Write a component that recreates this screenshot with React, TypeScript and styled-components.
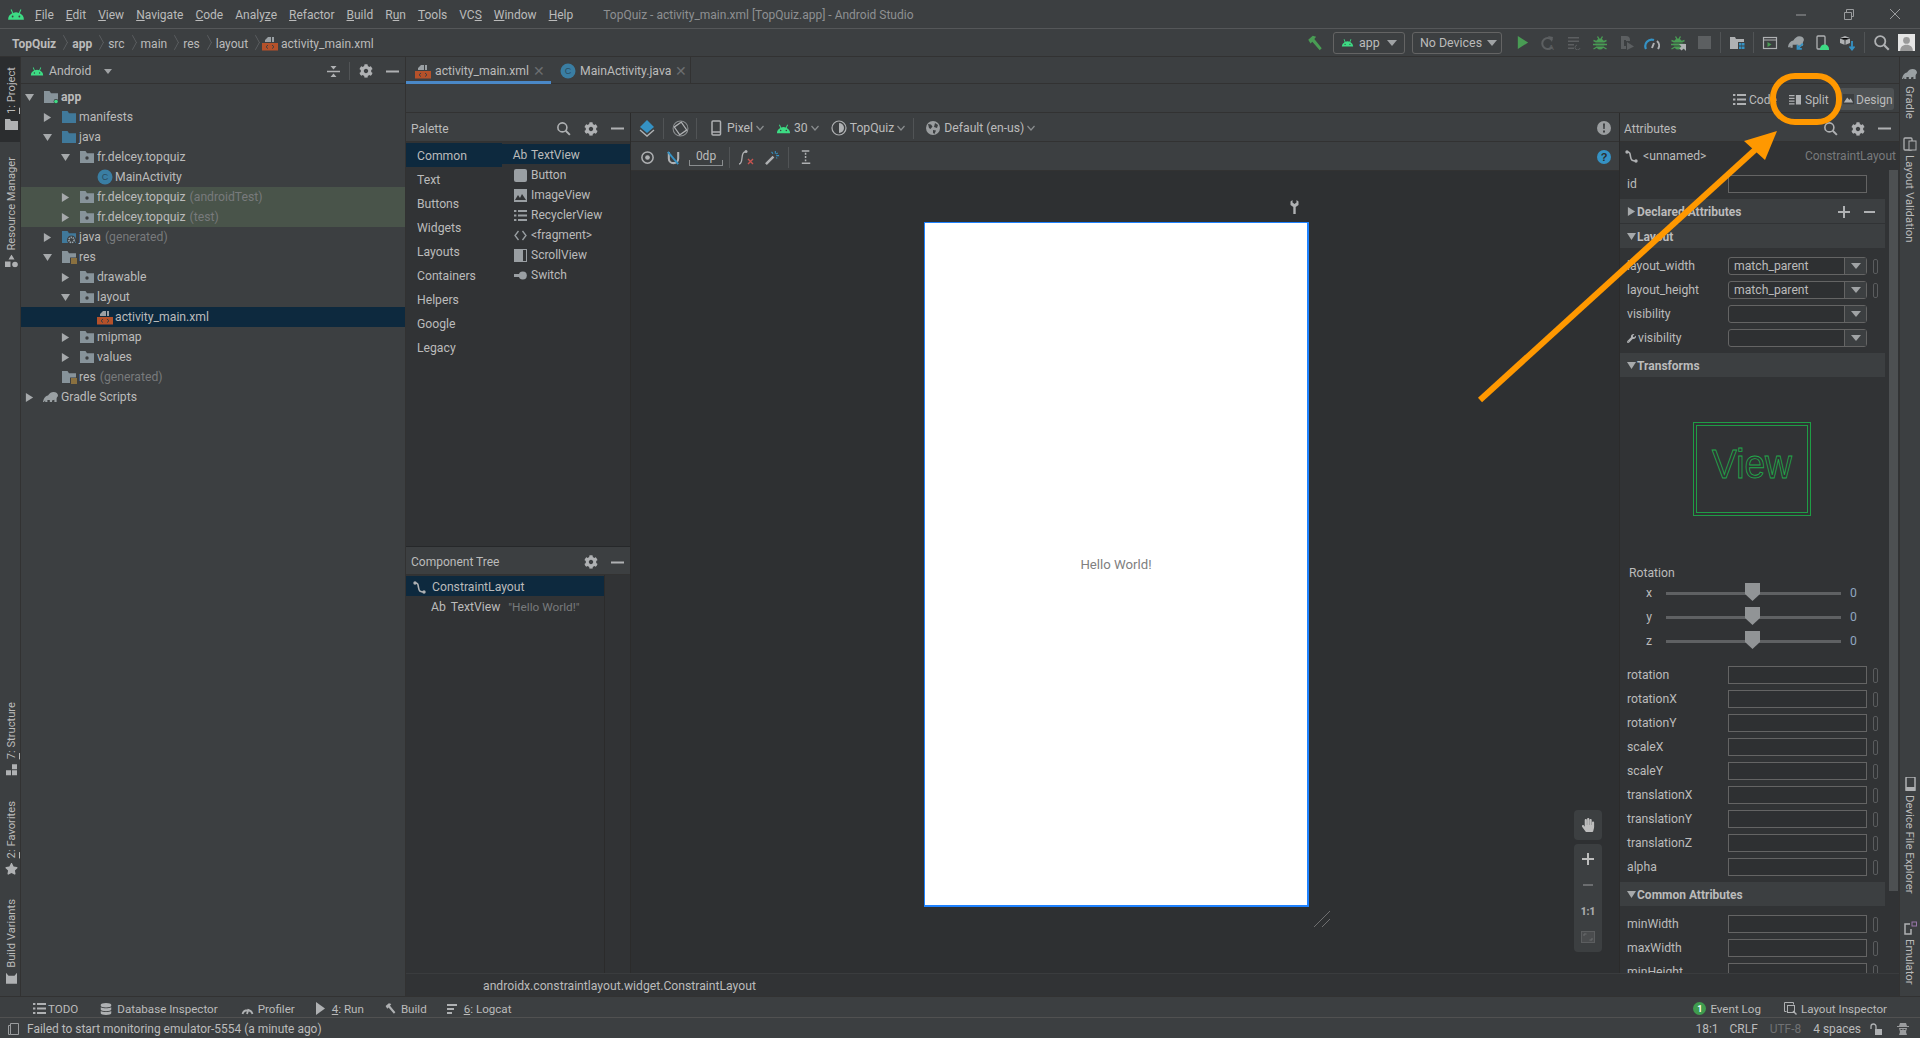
import React from 'react';
import styled, { createGlobalStyle } from 'styled-components';
import { FaCog, FaStar, FaHandPaper, FaDatabase, FaWrench } from 'react-icons/fa';

const Global = createGlobalStyle`
  html, body { margin: 0; padding: 0; background: #3c3f41; }
  body { font-family: Roboto, "Noto Sans", "Liberation Sans", sans-serif; font-size: 12px; color: #bbbbbb; overflow: hidden; }
  * { box-sizing: border-box; }
  u { text-underline-offset: 1px; }
`;

const Page = styled.div`
  position: relative; width: 1920px; height: 1038px; display: flex; flex-direction: column; overflow: hidden; background: #3c3f41;
`;
const Ic = styled.svg<{ $s?: number; $h?: number }>`
  width: ${p => p.$s ?? 16}px; height: ${p => p.$h ?? p.$s ?? 16}px; flex: none; display: block;
`;

/* ---------- icons ---------- */
type IP = { s?: number; c?: string };
const Android = ({ s = 16, c = '#3ddc84' }: IP) => (
  <Ic $s={s} viewBox="0 0 16 16"><path fill={c} d="M1 13a7 6.4 0 0 1 3.6-5.6L3.2 4.2l.9-.4 1.4 3.2a7 7 0 0 1 5 0l1.4-3.2.9.4-1.4 3.2A7 6.4 0 0 1 15 13z" /><circle cx="5" cy="10.2" r=".8" fill="#3c3f41" /><circle cx="11" cy="10.2" r=".8" fill="#3c3f41" /></Ic>
);
const Folder = ({ c = '#87939a', children }: { c?: string; children?: React.ReactNode }) => (
  <Ic $s={16} viewBox="0 0 16 16"><path fill={c} d="M1 2h5.5L8 4.2h7V14H1z" />{children}</Ic>
);
const Pkg = () => <Folder><circle cx="8" cy="9" r="1.7" fill="#3c3f41" /></Folder>;
const AppFolder = () => <Folder><circle cx="13" cy="12.5" r="2.4" fill="#3c3f41" /><circle cx="13" cy="12.5" r="1.8" fill="#3ddc84" /></Folder>;
const ResFolder = () => (
  <Folder><rect x="9" y="8.5" width="7" height="7.5" fill="#3c3f41" /><path stroke="#d9a441" d="M10 10h6M10 12h6M10 14h6" /></Folder>
);
const GenFolder = () => (
  <Folder c="#40799b"><circle cx="10.5" cy="11" r="4.5" fill="#3c3f41" /><circle cx="10.5" cy="11" r="2.6" fill="none" stroke="#9aa7b0" strokeWidth="1.6" strokeDasharray="1.4 .8" /></Folder>
);
const ClassIc = () => (
  <Ic $s={16} viewBox="0 0 16 16"><circle cx="8" cy="8" r="7.5" fill="#3a7ea3" /><text x="8" y="11.2" fontSize="9" fontFamily="Liberation Sans" textAnchor="middle" fill="#2b4c5e">C</text></Ic>
);
const Xml = () => (
  <Ic $s={16} viewBox="0 0 16 16"><path fill="#9aa0a4" d="M3 7V5l3-3h3v5zM10 2h2v5h-2z" /><rect y="8" width="16" height="7.5" fill="#b5512a" /><path fill="none" stroke="#3c3f41" d="M6 10l-2 1.8L6 13.6M10 10l2 1.8-2 1.8" /></Ic>
);
const Tri = ({ open }: { open?: boolean }) => (
  <Ic $s={9} viewBox="0 0 10 10">{open ? <path fill="#a6a9ab" d="M0 1h10L5 9z" /> : <path fill="#a6a9ab" d="M1 0v10l8-5z" />}</Ic>
);
const Search = ({ s = 16 }: IP) => (
  <Ic $s={s} viewBox="0 0 16 16"><circle cx="6.8" cy="6.8" r="4.8" fill="none" stroke="#afb1b3" strokeWidth="1.7" /><path stroke="#afb1b3" strokeWidth="2" d="M10.4 10.4l4.4 4.4" /></Ic>
);
const Gear = () => <FaCog size={14} color="#afb1b3" />;
const Minus = () => <Ic $s={13} viewBox="0 0 13 13"><rect y="5.5" width="13" height="2" fill="#afb1b3" /></Ic>;
const Plus = ({ c = '#afb1b3' }: IP) => <Ic $s={12} viewBox="0 0 12 12"><path fill={c} d="M5 0h2v5h5v2H7v5H5V7H0V5h5z" /></Ic>;
const Chevron = () => <Ic $s={8} $h={6} viewBox="0 0 8 6"><path fill="none" stroke="#8a8d8f" strokeWidth="1.2" d="M.5 1L4 5l3.5-4" /></Ic>;
const Hammer = ({ s = 16, c = '#499c54' }: IP) => (
  <Ic $s={s} viewBox="0 0 16 16"><path fill={c} d="M2 5l4-3.5 3 1-1.6 2 6.6 8.2-1.8 1.8L5.6 6.8 4 8.4z" /></Ic>
);
const Bug = ({ c = '#499c54', extra }: { c?: string; extra?: boolean }) => (
  <Ic $s={16} viewBox="0 0 16 16"><ellipse cx="8" cy="9" rx="4.5" ry="5.5" fill={c} /><path stroke={c} strokeWidth="1.4" d="M1.5 5.5L5 7M14.5 5.5L11 7M1 9.5h3M15 9.5h-3M1.5 14L5 12M14.5 14L11 12M5.5 1.5L7 4M10.5 1.5L9 4" /><path stroke="#3c3f41" d="M3.5 8h9M3.5 11h9" />{extra && <path fill="#afb1b3" d="M9 9h7v7l-2.4-2.4-2 2-2.2-2.2 2-2z" />}</Ic>
);
const Elephant = ({ s = 16, c = '#9aa0a3' }: IP) => (
  <Ic $s={s} viewBox="0 0 16 16"><path fill={c} d="M0 13c.5-3 2-6 5-6.5C6.5 4 8.5 3 10.5 3c2.8 0 4.5 1.6 4.5 3.6 0 .8-.4 1.3-1 1.6l-.4 1.4V13h-2.2v-2.2L9 11.5V13H6.8v-2L4.4 11v2H2.2v-1.8L1 13z" /></Ic>
);
const ListIc = ({ c = '#afb1b3' }: IP) => <Ic $s={13} viewBox="0 0 13 13"><path fill={c} d="M0 1h2.4v2H0zM4 1h9v2H4zM0 5.5h2.4v2H0zM4 5.5h9v2H4zM0 10h2.4v2H0zM4 10h9v2H4z" /></Ic>;

/* ---------- title bar ---------- */
const TitleBar = styled.div`
  height: 29px; flex: none; display: flex; align-items: center; position: relative; border-bottom: 1px solid #555759; padding-left: 7px;
`;
const MenuItem = styled.span<{ $ml: number }>` margin-left: ${p => p.$ml}px; padding-top: 2px; white-space: nowrap; font-size: 12px; `;
const TitleText = styled.span` margin-left: 30px; padding-top: 2px; color: #8e9092; white-space: nowrap; font-size: 12px; `;
const WinControls = styled.div` margin-left: auto; display: flex; align-items: center; gap: 32px; padding-right: 17px; `;

const menus: React.ReactNode[] = [
  <><u>F</u>ile</>, <><u>E</u>dit</>, <><u>V</u>iew</>, <><u>N</u>avigate</>, <><u>C</u>ode</>,
  <>Analy<u>z</u>e</>, <><u>R</u>efactor</>, <><u>B</u>uild</>, <>R<u>u</u>n</>, <><u>T</u>ools</>,
  <>VC<u>S</u></>, <><u>W</u>indow</>, <><u>H</u>elp</>,
];

/* ---------- nav bar ---------- */
const NavBar = styled.div`
  height: 28px; flex: none; display: flex; align-items: center; padding: 0 1px 0 12px; border-bottom: 1px solid #323232;
`;
const Crumb = styled.span<{ $bold?: boolean }>` font-weight: ${p => (p.$bold ? 700 : 400)}; white-space: nowrap; font-size: 12px; padding-top: 2px; `;
const CrumbSep = styled.span`
  width: 6px; height: 17px; margin: 0 5px; flex: none; position: relative;
  &::before { content: ''; position: absolute; left: -3px; top: 3px; width: 10px; height: 10px; border-top: 1px solid #606366; border-right: 1px solid #606366; transform: scaleX(.55) rotate(45deg); }
`;
const NavFile = styled.div` display: flex; align-items: center; margin-left: -2px; `;
const Spacer = styled.div` flex: 1; `;
const Combo = styled.div<{ $w: number; $ml?: number }>`
  width: ${p => p.$w}px; height: 22px; flex: none; margin-right: 7px; margin-left: ${p => p.$ml ?? 0}px; border: 1px solid #646464; border-radius: 3px; display: flex; align-items: center; gap: 5px; padding: 0 7px; white-space: nowrap; font-size: 12.4px;
  &:last-of-type { margin-right: 5px; }
`;
const CaretDown = styled.i<{ $small?: boolean }>`
  margin-left: ${p => (p.$small ? '0' : 'auto')}; width: 0; height: 0; flex: none;
  border-left: ${p => (p.$small ? 4 : 5)}px solid transparent; border-right: ${p => (p.$small ? 4 : 5)}px solid transparent; border-top: ${p => (p.$small ? 5 : 6)}px solid #a0a3a5;
`;
const Slot = styled.div<{ $ml?: number }>` width: 26px; height: 22px; flex: none; display: flex; align-items: center; justify-content: center; margin-left: ${p => p.$ml ?? 0}px; `;
const VDiv = styled.div<{ $m?: number; $h?: number }>` width: 1px; height: ${p => p.$h ?? 21}px; background: #515456; flex: none; margin: 0 ${p => p.$m ?? 3}px; `;

/* ---------- main ---------- */
const Main = styled.div` height: 939px; flex: none; display: flex; `;
const LeftStrip = styled.div`
  width: 21px; flex: none; display: flex; flex-direction: column; border-right: 1px solid #323232;
`;
const LeftTab = styled.div<{ $active?: boolean; $mt?: number }>`
  writing-mode: vertical-rl; transform: rotate(180deg); display: flex; align-items: center; gap: 4px; width: 20px; flex: none;
  font-size: 11.2px; white-space: nowrap; margin-top: ${p => p.$mt ?? 0}px; padding-right: 3px;
  background: ${p => (p.$active ? '#2b2d2f' : 'transparent')};
  ${p => (p.$active ? 'height: 85px; padding-top: 11px;' : '')}
  svg { transform: rotate(180deg); }
`;
const LeftBottom = styled.div` margin-top: auto; display: flex; flex-direction: column; gap: 24px; padding-bottom: 11px; `;

const ProjectPanel = styled.div` width: 384px; flex: none; display: flex; flex-direction: column; `;
const ProjectHeader = styled.div`
  height: 27px; flex: none; display: flex; align-items: center; padding: 2px 0 0 9px; gap: 4px; border-bottom: 1px solid #323232;
`;
const ProjectTitle = styled.span` margin-left: 1px; font-size: 12.2px; `;
const HeaderIcons = styled.div` margin-left: auto; display: flex; align-items: center; `;
const Tree = styled.div` padding-top: 3px; display: flex; flex-direction: column; `;
const TreeRow = styled.div<{ $depth: number; $tone?: 'sel' | 'test'; $bold?: boolean }>`
  height: 20px; display: flex; align-items: center; padding-left: ${p => 2 + p.$depth * 18}px; white-space: nowrap; font-size: 12.2px;
  font-weight: ${p => (p.$bold ? 700 : 400)};
  background: ${p => (p.$tone === 'sel' ? '#0d293e' : p.$tone === 'test' ? '#49544a' : 'transparent')};
`;
const Arrow = styled.span` width: 20px; flex: none; display: flex; justify-content: flex-start; padding-left: 2px; `;
const TreeIcon = styled.span` width: 18px; flex: none; display: flex; `;
const Dim = styled.span` color: #787a7c; margin-left: 4px; `;

const Editor = styled.div` flex: 1; min-width: 0; display: flex; flex-direction: column; border-left: 1px solid #323232; `;
const TabRow = styled.div` height: 27px; flex: none; display: flex; border-bottom: 1px solid #323232; `;
const FileTab = styled.div<{ $active?: boolean; $w: number }>`
  width: ${p => p.$w}px; flex: none; display: flex; align-items: center; gap: 4px; padding-left: 9px; position: relative; font-size: 12.2px; white-space: nowrap; height: 27px;
  ${p => (p.$active
    ? 'border-bottom: 3px solid #4a88c7; padding-top: 4px;'
    : 'border-right: 1px solid #323232; padding-top: 1px;')}
`;
const CloseX = styled.span` color: #6b6e70; font-size: 14px; margin-left: auto; margin-right: 7px; font-weight: 300; `;
const ViewRow = styled.div`
  height: 29px; flex: none; display: flex; align-items: center; justify-content: flex-end; padding: 2px 5px 0 0; border-bottom: 1px solid #323232;
`;
const ViewBtn = styled.div<{ $active?: boolean; $w: number; $gap: number; $pl: number }>`
  width: ${p => p.$w}px; height: 22px; display: flex; align-items: center; gap: ${p => p.$gap}px; padding: 1px 0 0 ${p => p.$pl}px; border-radius: 3px; flex: none; font-size: 12px;
  background: ${p => (p.$active ? '#4e5254' : 'transparent')};
`;
const Body = styled.div` height: 860px; flex: none; display: flex; `;
const PaletteCol = styled.div` width: 225px; flex: none; display: flex; flex-direction: column; border-right: 1px solid #2b2b2b; `;
const SmallHeader = styled.div`
  height: 29px; flex: none; display: flex; align-items: center; padding: 3px 0 0 5px; gap: 12px; font-size: 12px; border-bottom: 1px solid #323232;
`;
const HeaderRight = styled.div<{ $pr?: number }>` margin-left: auto; display: flex; align-items: center; gap: 13px; padding-right: ${p => p.$pr ?? 6}px; `;
const PaletteLists = styled.div` height: 405px; flex: none; display: flex; background: #313335; border-bottom: 1px solid #26282a; `;
const Categories = styled.div` width: 96px; flex: none; padding-top: 1px; `;
const Category = styled.div<{ $sel?: boolean }>`
  height: 24px; display: flex; align-items: center; padding: 2px 0 0 11px; font-size: 12.2px; background: ${p => (p.$sel ? '#0d293e' : 'transparent')};
`;
const PaletteItems = styled.div` flex: 1; padding-top: 2px; `;
const PaletteItem = styled.div<{ $sel?: boolean }>`
  height: 20px; display: flex; align-items: center; gap: 4px; padding: 2px 0 0 11px; font-size: 12px; background: ${p => (p.$sel ? '#0d293e' : 'transparent')};
`;
const PalIcon = styled.span` width: 14px; flex: none; display: flex; justify-content: center; font-size: 12px; `;
const TreeHeader = styled(SmallHeader)` height: 28px; `;
const CompTree = styled.div` flex: 1; display: flex; background: #313335; `;
const CompList = styled.div` width: 199px; flex: none; border-right: 1px solid #2b2b2b; padding-top: 1px; `;
const CompRow = styled.div<{ $sel?: boolean; $pl: number; $gap: number }>`
  height: 20px; display: flex; align-items: center; gap: ${p => p.$gap}px; padding: 2px 0 0 ${p => p.$pl}px; font-size: 12.2px; background: ${p => (p.$sel ? '#0d293e' : 'transparent')}; white-space: nowrap;
`;
const CompDim = styled(Dim)` margin-left: 3px; font-size: 11.8px; `;

const Center = styled.div` flex: 1; min-width: 0; display: flex; flex-direction: column; `;
const DesignBar = styled.div`
  height: 29px; flex: none; display: flex; align-items: center; padding: 2px 8px 0 0; border-bottom: 1px solid #323232; background: #3c3f41;
`;
const DesignDrop = styled.div<{ $ml: number }>` display: flex; align-items: center; gap: 3px; margin-left: ${p => p.$ml}px; font-size: 12.2px; white-space: nowrap; `;
const ZeroDp = styled.div`
  width: 34px; height: 18px; margin-left: 3px; flex: none; text-align: center; line-height: 17px; border-bottom: 1px solid #8a8d8f; position: relative; font-size: 12px;
  &::before, &::after { content: ''; position: absolute; bottom: -1px; width: 1px; height: 6px; background: #8a8d8f; }
  &::before { left: 0; } &::after { right: 0; }
`;
const Canvas = styled.div` flex: 1; position: relative; background: #2e3032; padding: 51px 0 0 293px; overflow: hidden; `;
const Device = styled.div`
  width: 385px; height: 685px; background: #fff; border: 1px solid #1e82ff; border-width: 1px 2px 2px 1px; display: flex; align-items: center; justify-content: center;
  color: #808080; font-size: 13.2px;
`;
const FloatPad = styled.div<{ $top: number; $h: number; $pt?: number }>`
  position: absolute; left: 943px; top: ${p => p.$top}px; width: 28px; height: ${p => p.$h}px; padding-top: ${p => p.$pt ?? 0}px; background: #3c3f41; border-radius: 4px; display: flex; flex-direction: column; align-items: center;
`;
const PadCell = styled.div<{ $h?: number }>` height: ${p => p.$h ?? 26}px; flex: none; display: flex; align-items: center; justify-content: center; font-weight: 900; font-size: 10px; color: #a9abad; `;
const WrenchMark = styled.div` position: absolute; left: 659px; top: 29px; `;
const Resize = styled.svg` position: absolute; left: 682px; top: 739px; width: 18px; height: 18px; `;

const AttrPanel = styled.div` width: 280px; flex: none; display: flex; flex-direction: column; background: #313335; border-left: 1px solid #2b2b2b; `;
const AttrHeader = styled(SmallHeader)` background: #3c3f41; padding-left: 4px; `;
const UnnamedRow = styled.div` height: 28px; flex: none; display: flex; align-items: center; padding: 0 3px 0 5px; gap: 5px; font-size: 12.2px; `;
const DimRight = styled.span` margin-left: auto; color: #787a7c; font-size: 12px; `;
const AttrScroll = styled.div` flex: 1; min-height: 0; display: flex; overflow: hidden; `;
const AttrContent = styled.div` width: 265px; flex: none; display: flex; flex-direction: column; `;
const Thumb = styled.div` width: 9px; height: 723px; background: #4d5052; margin: -2px 0 0 4px; flex: none; position: relative; `;
const IdRow = styled.div` height: 28px; flex: none; display: flex; align-items: center; padding-left: 7px; font-size: 12.2px; `;
const Section = styled.div<{ $mt?: number; $mb?: number }>`
  height: 24px; flex: none; display: flex; align-items: center; gap: 1px; padding: 1px 10px 0 7px; background: #3c3f41; font-weight: 700; font-size: 12px;
  margin-top: ${p => p.$mt ?? 1}px; margin-bottom: ${p => p.$mb ?? 0}px;
`;
const SectionBtns = styled.div` margin-left: auto; display: flex; align-items: center; gap: 14px; `;
const AttrRow = styled.div` height: 24px; flex: none; display: flex; align-items: center; padding-left: 7px; font-size: 12.2px; `;
const AttrLabel = styled.span` width: 101px; flex: none; display: flex; align-items: center; gap: 2px; white-space: nowrap; `;
const AttrInput = styled.div`
  width: 139px; height: 18px; flex: none; border: 1px solid #646464; background: #2e3032; padding-left: 5px; line-height: 16px; font-size: 12.2px;
`;
const AttrSelect = styled(AttrInput)` border-radius: 3px; display: flex; padding-left: 5px; `;
const SelArrow = styled.div`
  margin-left: auto; width: 22px; flex: none; border-left: 1px solid #646464; background: #3c3f41; display: flex; align-items: center; justify-content: center;
`;
const Pill = styled.div` width: 5px; height: 15px; margin-left: 6px; border: 1px solid #5a5c5e; border-radius: 2px; flex: none; `;
const Preview = styled.div` height: 186px; flex: none; display: flex; align-items: center; justify-content: center; padding: 0 2px 2px 0; `;
const PreviewSvg = styled.svg` width: 118px; height: 94px; `;
const RotLabel = styled.div` height: 20px; margin-bottom: -2px; flex: none; display: flex; align-items: center; padding-left: 9px; font-size: 12.2px; `;
const RotRow = styled.div` height: 24px; flex: none; display: flex; align-items: center; font-size: 12.2px; `;
const RotAxis = styled.span` width: 46px; flex: none; text-align: right; padding-right: 14px; padding-left: 16px; `;
const Track = styled.div` width: 175px; height: 3px; background: #5f6163; flex: none; position: relative; `;
const SliderThumb = styled.svg` position: absolute; left: 79px; top: -9px; width: 15px; height: 18px; `;
const RotVal = styled.span` margin-left: 9px; color: #8fa6c0; `;
const Gap = styled.div<{ $w?: number; $h?: number }>` width: ${p => p.$w ?? 0}px; height: ${p => p.$h ?? 0}px; flex: none; `;

const PathRow = styled.div` height: 23px; flex: none; display: flex; align-items: center; padding: 1px 0 0 77px; background: #313335; border-top: 1px solid #3a3c3e; font-size: 12.2px; `;

const RightStrip = styled.div`
  width: 21px; flex: none; display: flex; flex-direction: column; align-items: center; border-left: 1px solid #323232; padding: 9px 0 11px;
`;
const RightTab = styled.div<{ $mt?: number }>`
  writing-mode: vertical-rl; display: flex; align-items: center; gap: 4px; white-space: nowrap; font-size: 11.4px; margin-top: ${p => p.$mt ?? 0}px;
`;

/* ---------- bottom ---------- */
const ToolBar = styled.div`
  height: 22px; flex: none; display: flex; align-items: center; padding-top: 3px; border-top: 1px solid #323232; border-bottom: 1px solid #515151; font-size: 11.6px;
`;
const ToolBtn = styled.div<{ $ml: number; $gap?: number }>` display: flex; align-items: center; gap: ${p => p.$gap ?? 4}px; margin-left: ${p => p.$ml}px; white-space: nowrap; `;
const Badge = styled.span`
  width: 13px; height: 13px; border-radius: 50%; background: #3f9c4e; color: #fff; font-size: 9px; font-weight: 700; display: flex; align-items: center; justify-content: center; flex: none;
`;
const StatusBar = styled.div` height: 20px; flex: none; display: flex; align-items: center; padding: 2px 0 0 7px; font-size: 11.95px; `;
const StatusMsg = styled.span` margin-left: 6px; white-space: nowrap; `;
const StatusItem = styled.span<{ $ml: number; $dim?: boolean }>` margin-left: ${p => p.$ml}px; white-space: nowrap; color: ${p => (p.$dim ? '#6f7173' : '#bbbbbb')}; display: flex; `;

const Overlay = styled.svg` position: absolute; left: 0; top: 0; width: 1920px; height: 1038px; pointer-events: none; `;

const treeRows: { d: number; arrow?: 'o' | 'c'; icon?: React.ReactNode; text: string; dim?: string; tone?: 'sel' | 'test'; bold?: boolean }[] = [
  { d: 0, arrow: 'o', icon: <AppFolder />, text: 'app', bold: true },
  { d: 1, arrow: 'c', icon: <Folder c="#40799b" />, text: 'manifests' },
  { d: 1, arrow: 'o', icon: <Folder c="#40799b" />, text: 'java' },
  { d: 2, arrow: 'o', icon: <Pkg />, text: 'fr.delcey.topquiz' },
  { d: 3, icon: <ClassIc />, text: 'MainActivity' },
  { d: 2, arrow: 'c', icon: <Pkg />, text: 'fr.delcey.topquiz', dim: '(androidTest)', tone: 'test' },
  { d: 2, arrow: 'c', icon: <Pkg />, text: 'fr.delcey.topquiz', dim: '(test)', tone: 'test' },
  { d: 1, arrow: 'c', icon: <GenFolder />, text: 'java', dim: '(generated)' },
  { d: 1, arrow: 'o', icon: <ResFolder />, text: 'res' },
  { d: 2, arrow: 'c', icon: <Pkg />, text: 'drawable' },
  { d: 2, arrow: 'o', icon: <Pkg />, text: 'layout' },
  { d: 3, icon: <Xml />, text: 'activity_main.xml', tone: 'sel' },
  { d: 2, arrow: 'c', icon: <Pkg />, text: 'mipmap' },
  { d: 2, arrow: 'c', icon: <Pkg />, text: 'values' },
  { d: 1, icon: <ResFolder />, text: 'res', dim: '(generated)' },
  { d: 0, arrow: 'c', icon: <Elephant />, text: 'Gradle Scripts' },
];

const paletteItems: [React.ReactNode, string][] = [
  ['Ab', 'TextView'],
  [<Ic $s={13} viewBox="0 0 13 13"><rect width="13" height="13" rx="2" fill="#9a9fa3" /></Ic>, 'Button'],
  [<Ic $s={13} viewBox="0 0 13 13"><rect width="13" height="13" fill="#9a9fa3" /><path fill="#313335" d="M1 11l3-5 2 3 2-4 4 6z" /></Ic>, 'ImageView'],
  [<ListIc c="#9a9fa3" />, 'RecyclerView'],
  [<Ic $s={13} viewBox="0 0 13 13"><path fill="none" stroke="#9a9fa3" strokeWidth="1.3" d="M4.5 2L1 6.5 4.5 11M8.5 2L12 6.5 8.5 11" /></Ic>, '<fragment>'],
  [<Ic $s={13} viewBox="0 0 13 13"><rect width="13" height="13" fill="#9a9fa3" /><rect x="9" y="1" width="3" height="11" fill="#313335" /></Ic>, 'ScrollView'],
  [<Ic $s={13} viewBox="0 0 13 13"><rect y="5" width="8" height="3" fill="#9a9fa3" /><circle cx="8.8" cy="6.5" r="4" fill="#9a9fa3" /></Ic>, 'Switch'],
];

const transforms = ['rotation', 'rotationX', 'rotationY', 'scaleX', 'scaleY', 'translationX', 'translationY', 'translationZ', 'alpha'];

const Constraint = () => (
  <Ic $s={13} viewBox="0 0 13 13"><path fill="none" stroke="#afb1b3" strokeWidth="1.6" d="M2 2c3 0 3 1 3.5 4.5S7 11 11 11" /><circle cx="2" cy="2" r="1.7" fill="#afb1b3" /><circle cx="11" cy="11" r="1.7" fill="#afb1b3" /></Ic>
);
const Caret = () => <Ic $s={10} $h={6} viewBox="0 0 10 6"><path fill="#a0a3a5" d="M0 0h10L5 6z" /></Ic>;
const Slider = ({ axis }: { axis: string }) => (
  <RotRow>
    <RotAxis>{axis}</RotAxis>
    <Track>
      <SliderThumb viewBox="0 0 15 18"><path fill="#919496" d="M0 0h15v11l-7.5 7L0 11z" /></SliderThumb>
    </Track>
    <RotVal>0</RotVal>
  </RotRow>
);

export default function App() {
  return (
    <Page>
      <Global />
      <TitleBar>
        <Android s={18} />
        {menus.map((m, i) => <MenuItem key={i} $ml={i === 0 ? 10 : 12}>{m}</MenuItem>)}
        <TitleText>TopQuiz - activity_main.xml [TopQuiz.app] - Android Studio</TitleText>
        <WinControls>
          <Ic $s={15} viewBox="0 0 15 15"><path stroke="#9a9c9e" d="M2 8h10" /></Ic>
          <Ic $s={15} viewBox="0 0 15 15"><path fill="none" stroke="#9a9c9e" d="M3.5 5.5h7v7h-7zM5.5 5.5v-3h7v7h-2" /></Ic>
          <Ic $s={15} viewBox="0 0 15 15"><path stroke="#9a9c9e" d="M2 2l10 10M12 2L2 12" /></Ic>
        </WinControls>
      </TitleBar>

      <NavBar>
        <Crumb $bold>TopQuiz</Crumb><CrumbSep />
        <Crumb $bold>app</Crumb><CrumbSep />
        <Crumb>src</Crumb><CrumbSep />
        <Crumb>main</Crumb><CrumbSep />
        <Crumb>res</Crumb><CrumbSep />
        <Crumb>layout</Crumb><CrumbSep />
        <NavFile><Xml /><Crumb>&nbsp;activity_main.xml</Crumb></NavFile>
        <Spacer />
        <Hammer s={18} />
        <Slot />
        <Combo $w={72} $ml={-17}><Android s={13} /> app <CaretDown /></Combo>
        <Combo $w={90}>No Devices <CaretDown /></Combo>
        <Slot><Ic $s={15} viewBox="0 0 16 16"><path fill="#499c54" d="M3 1l11 7-11 7z" /></Ic></Slot>
        <Slot><Ic $s={16} viewBox="0 0 16 16"><path fill="none" stroke="#5c5f61" strokeWidth="2" d="M12 5a5.5 5.5 0 1 0 0 7" /><path fill="#5c5f61" d="M8 1l5 1-1 5z" /><text x="8.5" y="15" fontSize="8" fill="#5c5f61" fontFamily="Liberation Sans">A</text></Ic></Slot>
        <Slot><Ic $s={15} viewBox="0 0 15 15"><path fill="#5c5f61" d="M1 2h11v1.5H1zM1 5.5h11V7H1zM1 9h6v1.5H1zM1 12.5h6V14H1z" /><path fill="none" stroke="#5c5f61" d="M10 10a2.5 2.5 0 1 0 3 3" /></Ic></Slot>
        <Slot><Bug /></Slot>
        <Slot><Ic $s={16} viewBox="0 0 16 16"><path fill="#5c5f61" d="M3 1h5a4 4 0 0 1 4 4v1H8V5H6v6h2v3H3zM9 7l7 4.5L9 15z" /></Ic></Slot>
        <Slot><Ic $s={16} viewBox="0 0 16 16"><path fill="none" stroke="#3592c4" strokeWidth="2.2" d="M2 14a6.5 6.5 0 0 1 8-9" /><path fill="none" stroke="#afb1b3" strokeWidth="2" d="M13 6a6 6 0 0 1 1 8M8 13l2-5" /></Ic></Slot>
        <Slot><Bug extra /></Slot>
        <Slot><Ic $s={13} viewBox="0 0 13 13"><rect width="13" height="13" fill="#5c5f61" /></Ic></Slot>
        <VDiv />
        <Slot><Ic $s={16} viewBox="0 0 16 16"><path fill="#afb1b3" d="M1 2h5l1 2h8v3H9v7H1z" /><path fill="#3592c4" d="M10 8h2.5v2.5H10zM13 8h2.5v2.5H13zM10 11.5h2.5V14H10zM13 11.5h2.5V14H13z" /></Ic></Slot>
        <VDiv />
        <Slot><Ic $s={16} viewBox="0 0 16 16"><rect x="1.5" y="2.5" width="13" height="11" fill="none" stroke="#afb1b3" strokeWidth="1.2" /><path stroke="#afb1b3" d="M1.5 5h13" /><path fill="#499c54" d="M5.5 7l4 2.5-4 2.5z" /></Ic></Slot>
        <Slot><Ic $s={17} viewBox="0 0 16 16"><path fill="#9aa0a3" d="M0 12c.5-3 2-5.5 5-6C6.5 3.5 8.5 2 10.5 2c2.8 0 4.5 1.6 4.5 3.6l-1 2.4v3H9V10L4.4 10v3H2.2v-1.8L1 13z" /><path stroke="#3592c4" strokeWidth="1.8" fill="none" d="M14 9l-5 5M9 10v4h4" /></Ic></Slot>
        <Slot><Ic $s={16} viewBox="0 0 16 16"><rect x="3" y="1" width="8" height="13" rx="1" fill="none" stroke="#afb1b3" strokeWidth="1.3" /><path fill="#3ddc84" d="M6 14a4.5 4.5 0 0 1 9 0v1H6z" /></Ic></Slot>
        <Slot><Ic $s={16} viewBox="0 0 16 16"><path fill="#afb1b3" d="M5 1l5 2v5l-5 2-5-2V3z" /><path stroke="#3c3f41" d="M0 3l5 2 5-2M5 5v5" /><path stroke="#3592c4" strokeWidth="1.8" fill="none" d="M12 6v8M9.5 11.5L12 14.5l2.5-3" /></Ic></Slot>
        <VDiv />
        <Slot><Search s={17} /></Slot>
        <Slot $ml={-1}><Ic $s={17} viewBox="0 0 16 16"><rect width="16" height="16" fill="#e4e4e4" /><circle cx="8" cy="6" r="3.2" fill="#9a9a9a" /><path fill="#9a9a9a" d="M2 16c0-4 2.5-6 6-6s6 2 6 6z" /></Ic></Slot>
      </NavBar>

      <Main>
        <LeftStrip>
          <LeftTab $active>
            <Ic $s={13} viewBox="0 0 13 13"><path fill="#afb1b3" d="M0 1h5l1 2h7v9H0z" /></Ic>
            <span><u>1</u>: Project</span>
          </LeftTab>
          <LeftTab $mt={15}>
            <Ic $s={13} viewBox="0 0 13 13"><path fill="#afb1b3" d="M6.5 0l3 5h-6zM0 7h5.5v5.5H0z" /><circle cx="10" cy="10" r="2.8" fill="#afb1b3" /></Ic>
            <span>Resource Manager</span>
          </LeftTab>
          <LeftBottom>
            <LeftTab>
              <Ic $s={13} viewBox="0 0 13 13"><path fill="#afb1b3" d="M7 1h5v5H7zM1 7h5v5H1zM7 7h5v5H7z" /></Ic>
              <span><u>7</u>: Structure</span>
            </LeftTab>
            <LeftTab>
              <FaStar size={13} color="#afb1b3" />
              <span><u>2</u>: Favorites</span>
            </LeftTab>
            <LeftTab>
              <Ic $s={13} viewBox="0 0 13 13"><path fill="#afb1b3" d="M1 1l2.5 3h6L12 1v11H1z" /></Ic>
              <span>Build Variants</span>
            </LeftTab>
          </LeftBottom>
        </LeftStrip>

        <ProjectPanel>
          <ProjectHeader>
            <Android s={14} />
            <ProjectTitle>Android</ProjectTitle>
            <Slot><CaretDown $small /></Slot>
            <HeaderIcons>
              <Slot><Ic $s={13} viewBox="0 0 13 13"><path fill="#afb1b3" d="M0 5.8h13v1.4H0zM6.5 4.5L3.5 1h6zM6.5 8.5l3 3.5h-6z" /></Ic></Slot>
              <VDiv $m={3} $h={18} />
              <Slot><Gear /></Slot>
              <Slot><Minus /></Slot>
            </HeaderIcons>
          </ProjectHeader>
          <Tree>
            {treeRows.map((r, i) => (
              <TreeRow key={i} $depth={r.d} $tone={r.tone} $bold={r.bold}>
                <Arrow>{r.arrow && <Tri open={r.arrow === 'o'} />}</Arrow>
                <TreeIcon>{r.icon}</TreeIcon>
                {r.text}
                {r.dim && <Dim>{r.dim}</Dim>}
              </TreeRow>
            ))}
          </Tree>
        </ProjectPanel>

        <Editor>
          <TabRow>
            <FileTab $active $w={145}><Xml />activity_main.xml<CloseX>✕</CloseX></FileTab>
            <FileTab $w={140}><ClassIc />MainActivity.java<CloseX>✕</CloseX></FileTab>
          </TabRow>
          <ViewRow>
            <ViewBtn $w={56} $gap={3} $pl={3}><ListIc />Code</ViewBtn>
            <ViewBtn $w={53} $gap={4} $pl={3}>
              <Ic $s={12} viewBox="0 0 13 13"><path fill="#afb1b3" d="M0 1h6v1.5H0zM0 4h6v1.5H0zM0 7h6v1.5H0zM0 10h6v1.5H0zM7.5 1H13v10.5H7.5z" /></Ic>
              Split
            </ViewBtn>
            <ViewBtn $active $w={55} $gap={2} $pl={4}>
              <Ic $s={11} viewBox="0 0 13 13"><rect width="13" height="12" fill="#3c3f41" /><path fill="#afb1b3" d="M1 10l4-6 2.5 3 1.5-2 3 5z" /></Ic>
              Design
            </ViewBtn>
          </ViewRow>
          <Body>
            <PaletteCol>
              <SmallHeader>
                Palette
                <HeaderRight>
                  <Search s={15} /><Gear /><Minus />
                </HeaderRight>
              </SmallHeader>
              <PaletteLists>
                <Categories>
                  {['Common', 'Text', 'Buttons', 'Widgets', 'Layouts', 'Containers', 'Helpers', 'Google', 'Legacy'].map((c, i) => (
                    <Category key={c} $sel={i === 0}>{c}</Category>
                  ))}
                </Categories>
                <PaletteItems>
                  {paletteItems.map(([ic, t], i) => (
                    <PaletteItem key={t} $sel={i === 0}><PalIcon>{ic}</PalIcon>{t}</PaletteItem>
                  ))}
                </PaletteItems>
              </PaletteLists>
              <TreeHeader>
                Component Tree
                <HeaderRight><Gear /><Minus /></HeaderRight>
              </TreeHeader>
              <CompTree>
                <CompList>
                  <CompRow $sel $pl={7} $gap={6}><Constraint />ConstraintLayout</CompRow>
                  <CompRow $pl={25} $gap={5}><span>Ab</span><span>TextView</span><CompDim>"Hello World!"</CompDim></CompRow>
                </CompList>
              </CompTree>
            </PaletteCol>

            <Center>
              <DesignBar>
                <Slot $ml={3}><Ic $s={18} viewBox="0 0 18 18"><path fill="#3592c4" d="M9 1l7 7-7 6-7-6z" /><path fill="none" stroke="#afb1b3" strokeWidth="1.4" d="M2 11l7 6 7-6" /></Ic></Slot>
                <VDiv />
                <Slot><Ic $s={17} viewBox="0 0 16 16"><circle cx="8" cy="8" r="7" fill="none" stroke="#8a8d8f" /><rect x="4" y="3.5" width="8" height="9" transform="rotate(-35 8 8)" fill="none" stroke="#afb1b3" strokeWidth="1.2" /></Ic></Slot>
                <VDiv />
                <DesignDrop $ml={8}>
                  <Ic $s={16} viewBox="0 0 16 16"><rect x="4" y="1" width="8.5" height="14" rx="1" fill="none" stroke="#afb1b3" strokeWidth="1.5" /><path stroke="#afb1b3" strokeWidth="1.5" d="M4 12h8" /></Ic>
                  Pixel <Chevron />
                </DesignDrop>
                <DesignDrop $ml={12}><Android s={15} />30 <Chevron /></DesignDrop>
                <DesignDrop $ml={12}>
                  <Ic $s={16} viewBox="0 0 16 16"><circle cx="8" cy="8" r="7" fill="none" stroke="#afb1b3" strokeWidth="1.2" /><path fill="#afb1b3" d="M8 3a5 5 0 0 1 0 10z" /></Ic>
                  TopQuiz <Chevron />
                </DesignDrop>
                <VDiv $m={8} />
                <DesignDrop $ml={3}>
                  <Ic $s={16} viewBox="0 0 16 16"><circle cx="8" cy="8" r="7" fill="#9a9d9f" /><path fill="#3c3f41" d="M3 4l3 .5 1.500 2-2 2.500L4 8zM10 3l3 2-1 3-3-1zM8 10l3 .5-1.500 3.500L8 13z" /></Ic>
                  Default (en-us) <Chevron />
                </DesignDrop>
                <Spacer />
                <Ic $s={14} viewBox="0 0 14 14"><circle cx="7" cy="7" r="7" fill="#9a9d9f" /><path fill="#3c3f41" d="M6 2.500h2l-.3 5.500H6.300zM6 9.500h2v2H6z" /></Ic>
              </DesignBar>
              <DesignBar>
                <Slot $ml={3}><Ic $s={15} viewBox="0 0 16 16"><circle cx="8" cy="8" r="6" fill="none" stroke="#afb1b3" strokeWidth="1.6" /><circle cx="8" cy="8" r="2.5" fill="#afb1b3" /></Ic></Slot>
                <Slot><Ic $s={15} viewBox="0 0 16 16"><path fill="none" stroke="#afb1b3" strokeWidth="2.2" d="M3 2v7a5 5 0 0 0 10 0V2" /><path stroke="#3592c4" strokeWidth="2" d="M2 2l11 13" /></Ic></Slot>
                <ZeroDp>0dp</ZeroDp>
                <VDiv $m={6} />
                <Slot $ml={-3}><Ic $s={16} viewBox="0 0 16 16"><path fill="none" stroke="#afb1b3" strokeWidth="1.3" d="M1 15c5 0 1-12 6-12" /><circle cx="8" cy="2.5" r="1.5" fill="#afb1b3" /><path stroke="#c75450" strokeWidth="1.4" d="M10 10l5 5M15 10l-5 5" /></Ic></Slot>
                <Slot><Ic $s={15} viewBox="0 0 16 16"><path stroke="#afb1b3" strokeWidth="2.6" d="M1 15l8-8" /><path stroke="#3592c4" strokeWidth="1.1" d="M11 1v3M13.5 3l-1.5 1.5M15 6h-3M7 2l1.5 2M13 9l-1-1" /></Ic></Slot>
                <VDiv />
                <Slot $ml={1}><Ic $s={15} viewBox="0 0 16 16"><path stroke="#afb1b3" strokeWidth="1.6" d="M3 1h8M3 14h9" /><path stroke="#afb1b3" strokeWidth="1.6" strokeDasharray="2 1.5" d="M7 3v10" /></Ic></Slot>
                <Spacer />
                <Ic $s={14} viewBox="0 0 14 14"><circle cx="7" cy="7" r="7" fill="#3592c4" /><text x="7" y="11" fontSize="11" fontWeight="700" textAnchor="middle" fontFamily="Liberation Sans" fill="#2b2d2f">?</text></Ic>
              </DesignBar>
              <Canvas>
                <WrenchMark><Ic $s={9} $h={14} viewBox="0 0 8 14"><path fill="#afb1b3" d="M2 0v2.5L4 4l2-1.5V0l2 1.500V5L5.200 7v7H2.800V7L0 5V1.500z" /></Ic></WrenchMark>
                <Device>Hello World!</Device>
                <Resize viewBox="0 0 18 18"><path stroke="#808080" strokeWidth=".8" d="M1 17L17 1M9 17l8-8" /></Resize>
                <FloatPad $top={639} $h={30}><PadCell $h={30}><FaHandPaper size={14} color="#bdbdbd" /></PadCell></FloatPad>
                <FloatPad $top={673} $h={108} $pt={2}>
                  <PadCell><Plus c="#bdbdbd" /></PadCell>
                  <PadCell><Ic $s={10} $h={2} viewBox="0 0 10 2"><rect width="10" height="2" fill="#6b6d6f" /></Ic></PadCell>
                  <PadCell>1:1</PadCell>
                  <PadCell><Ic $s={14} $h={12} viewBox="0 0 14 12"><rect x=".5" y=".5" width="13" height="11" fill="#4a4c4e" stroke="#5c5e60" /><path fill="none" stroke="#6b6d6f" d="M3 5V3h2.5M11 7v2H8.500" /></Ic></PadCell>
                </FloatPad>
              </Canvas>
            </Center>

            <AttrPanel>
              <AttrHeader>
                Attributes
                <HeaderRight $pr={8}><Search s={15} /><Gear /><Minus /></HeaderRight>
              </AttrHeader>
              <UnnamedRow><Constraint />&lt;unnamed&gt;<DimRight>ConstraintLayout</DimRight></UnnamedRow>
              <AttrScroll>
                <AttrContent>
                  <IdRow><AttrLabel>id</AttrLabel><AttrInput /></IdRow>
                  <Section><Tri />Declared Attributes<SectionBtns><Plus /><Ic $s={11} $h={2} viewBox="0 0 11 2"><rect width="11" height="2" fill="#afb1b3" /></Ic></SectionBtns></Section>
                  <Section $mb={6}><Tri open />Layout</Section>
                  <AttrRow><AttrLabel>layout_width</AttrLabel><AttrSelect>match_parent<SelArrow><Caret /></SelArrow></AttrSelect><Pill /></AttrRow>
                  <AttrRow><AttrLabel>layout_height</AttrLabel><AttrSelect>match_parent<SelArrow><Caret /></SelArrow></AttrSelect><Pill /></AttrRow>
                  <AttrRow><AttrLabel>visibility</AttrLabel><AttrSelect><SelArrow><Caret /></SelArrow></AttrSelect></AttrRow>
                  <AttrRow><AttrLabel><FaWrench size={9} color="#afb1b3" />visibility</AttrLabel><AttrSelect><SelArrow><Caret /></SelArrow></AttrSelect></AttrRow>
                  <Section $mt={3}><Tri open />Transforms</Section>
                  <Preview>
                    <PreviewSvg viewBox="0 0 118 94">
                      <rect x=".5" y=".5" width="117" height="93" fill="none" stroke="#1f9d45" />
                      <rect x="3.5" y="3.5" width="111" height="87" fill="none" stroke="#1f9d45" />
                      <text x="19" y="56" textLength="80" lengthAdjust="spacingAndGlyphs" fontFamily="Liberation Sans" fontSize="40" fill="none" stroke="#22a84b" strokeWidth=".9">View</text>
                    </PreviewSvg>
                  </Preview>
                  <RotLabel>Rotation</RotLabel>
                  <Slider axis="x" /><Slider axis="y" /><Slider axis="z" />
                  <Gap $h={10} />
                  {transforms.map(t => <AttrRow key={t}><AttrLabel>{t}</AttrLabel><AttrInput /><Pill /></AttrRow>)}
                  <Section $mt={3} $mb={6}><Tri open />Common Attributes</Section>
                  {['minWidth', 'maxWidth', 'minHeight'].map(t => <AttrRow key={t}><AttrLabel>{t}</AttrLabel><AttrInput /><Pill /></AttrRow>)}
                </AttrContent>
                <Thumb />
              </AttrScroll>
            </AttrPanel>
          </Body>
          <PathRow>androidx.constraintlayout.widget.ConstraintLayout</PathRow>
        </Editor>

        <RightStrip>
          <RightTab><Elephant /><span>Gradle</span></RightTab>
          <RightTab $mt={18}>
            <Ic $s={14} viewBox="0 0 14 14"><rect x="1" y="1" width="8" height="12" rx="1" fill="none" stroke="#afb1b3" strokeWidth="1.3" /><rect x="6" y="4" width="7" height="9" fill="#3c3f41" stroke="#afb1b3" /></Ic>
            <span>Layout Validation</span>
          </RightTab>
          <Spacer />
          <RightTab>
            <Ic $s={14} viewBox="0 0 14 14"><rect x="3" y="0" width="9" height="14" rx="1" fill="none" stroke="#afb1b3" strokeWidth="1.5" /><rect x="3" y="10" width="9" height="4" fill="#afb1b3" /></Ic>
            <span>Device File Explorer</span>
          </RightTab>
          <RightTab $mt={28}>
            <Ic $s={14} viewBox="0 0 14 14"><path fill="none" stroke="#afb1b3" strokeWidth="1.5" d="M7 3H2v10h6V8" /><rect x="9" y="1" width="4.5" height="4" fill="none" stroke="#9876aa" /></Ic>
            <span>Emulator</span>
          </RightTab>
        </RightStrip>
      </Main>

      <ToolBar>
        <ToolBtn $ml={33} $gap={2}><ListIc />TODO</ToolBtn>
        <ToolBtn $ml={22} $gap={5}><FaDatabase size={12} color="#afb1b3" />Database Inspector</ToolBtn>
        <ToolBtn $ml={23}>
          <Ic $s={13} viewBox="0 0 13 13"><path fill="none" stroke="#afb1b3" strokeWidth="1.8" d="M1.5 12a5.2 5.2 0 0 1 10 0M6 12l1.5-5" /></Ic>Profiler
        </ToolBtn>
        <ToolBtn $ml={20} $gap={6}>
          <Ic $s={11} $h={13} viewBox="0 0 11 13"><path fill="#afb1b3" d="M1 0l9 6.5L1 13z" /></Ic><span><u>4</u>: Run</span>
        </ToolBtn>
        <ToolBtn $ml={20}><Hammer s={13} c="#afb1b3" />Build</ToolBtn>
        <ToolBtn $ml={19} $gap={6}>
          <Ic $s={12} viewBox="0 0 12 12"><path fill="#afb1b3" d="M1 1h10v2H1zM1 5h7v2H1zM1 9h5v2H1z" /></Ic><span><u>6</u>: Logcat</span>
        </ToolBtn>
        <Spacer />
        <ToolBtn $ml={0}><Badge>1</Badge>Event Log</ToolBtn>
        <ToolBtn $ml={23}>
          <Ic $s={13} viewBox="0 0 13 13"><path fill="none" stroke="#afb1b3" d="M2.5 9.500H.5v-9h9v2" /><rect x="3.5" y="3.5" width="7" height="7" fill="none" stroke="#afb1b3" /><path stroke="#afb1b3" strokeWidth="1.4" d="M9 9l3.500 3.500" /></Ic>
          Layout Inspector
        </ToolBtn>
        <Gap $w={33} />
      </ToolBar>

      <StatusBar>
        <Ic $s={14} viewBox="0 0 14 14"><path fill="none" stroke="#9a9c9e" d="M3.500 1.500h8v11h-8zM3.500 3.500h-2v9h2" /></Ic>
        <StatusMsg>Failed to start monitoring emulator-5554 (a minute ago)</StatusMsg>
        <Spacer />
        <StatusItem $ml={0}>18:1</StatusItem>
        <StatusItem $ml={11}>CRLF</StatusItem>
        <StatusItem $ml={12} $dim>UTF-8</StatusItem>
        <StatusItem $ml={12}>4 spaces</StatusItem>
        <StatusItem $ml={9}><Ic $s={13} viewBox="0 0 13 13"><rect x="5" y="6" width="7" height="6" fill="#afb1b3" /><path fill="none" stroke="#afb1b3" strokeWidth="1.3" d="M1 6V3.500a2.500 2.500 0 0 1 5 0V6" /></Ic></StatusItem>
        <StatusItem $ml={13}><Ic $s={14} viewBox="0 0 14 14"><path fill="#9a9c9e" d="M4 1h6l1 3h2v1H1V4h2zM3 6h8l-1 4 1 3H3l1-3z" /><path stroke="#3c3f41" d="M4.500 7.500h2M7.500 7.500h2" /></Ic></StatusItem>
        <Gap $w={10} />
      </StatusBar>

      <Overlay viewBox="0 0 1920 1038">
        <rect x="1773" y="76" width="66" height="46" rx="22" fill="none" stroke="#ff9800" strokeWidth="6" />
        <path d="M1480 400L1757 148" stroke="#ff9800" strokeWidth="6" />
        <path d="M1777 131L1744 141L1765 160z" fill="#ff9800" />
      </Overlay>
    </Page>
  );
}
